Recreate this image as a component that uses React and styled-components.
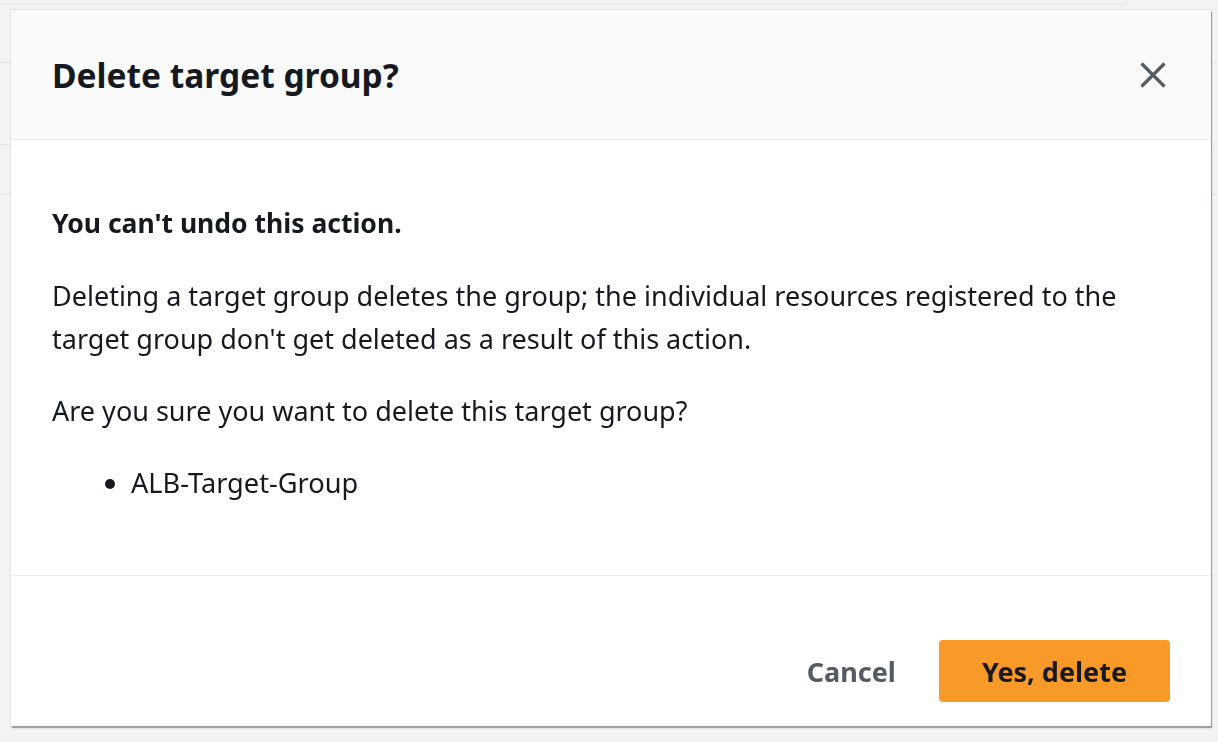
import React from "react";
import styled, { createGlobalStyle } from "styled-components";

const Global = createGlobalStyle`
  html, body { margin: 0; padding: 0; }
  body {
    background: #f2f3f3;
    font-family: "Noto Sans", "Open Sans", Arial, sans-serif;
    color: #16191f;
    width: 1218px;
    height: 742px;
    overflow: hidden;
  }
`;

const Page = styled.div`
  height: 742px;
  display: flex;
  flex-direction: column;
  background: #f2f3f3;
`;

const GhostBar = styled.div`
  height: ${(p) => p.$h}px;
  margin-right: ${(p) => p.$mr || 0}px;
  border-bottom: 1px solid ${(p) => p.$c || "#e6e8e8"};
  border-radius: 0 0 4px 0;
`;

const Overlay = styled.div`
  position: fixed;
  inset: 0;
  display: flex;
  align-items: flex-start;
  padding: 10px 0 0 11px;
`;

const Dialog = styled.div`
  width: 1200px;
  height: 716px;
  background: #ffffff;
  display: flex;
  flex-direction: column;
  box-shadow: 1px 2px 1px rgba(0, 28, 36, 0.35), 0 0 0 1px rgba(0, 28, 36, 0.06);
`;

const Header = styled.header`
  height: 129px;
  flex: none;
  display: flex;
  align-items: center;
  justify-content: space-between;
  padding: 0 41px;
  background: #fafafa;
  border-bottom: 1px solid #eaeded;
`;

const Title = styled.h2`
  margin: 0;
  font-size: 33.5px;
  line-height: 44px;
  font-weight: 700;
  color: #16191f;
`;

const CloseButton = styled.button`
  border: 0;
  background: transparent;
  padding: 0;
  width: 26px;
  height: 26px;
  display: flex;
  align-items: center;
  justify-content: center;
  cursor: pointer;
  margin-right: 4px;
`;

const Body = styled.div`
  flex: 1;
  padding: 62px 41px 0;
`;

const Para = styled.p`
  margin: 0 0 29px;
  font-size: ${(p) => (p.$strong ? 26.5 : 27)}px;
  line-height: 43px;
  font-weight: ${(p) => (p.$strong ? 700 : 400)};
`;

const List = styled.ul`
  margin: 0;
  padding-left: 79px;
  font-size: 27.2px;
  line-height: 43px;
`;

const Footer = styled.footer`
  height: 151px;
  flex: none;
  border-top: 1px solid #eaeded;
  display: flex;
  justify-content: flex-end;
  align-items: flex-start;
  padding: 64px 41px 0;
  box-sizing: border-box;
`;

const Button = styled.button`
  height: 62px;
  border-radius: 4px;
  border: 0;
  font-family: inherit;
  font-size: 27px;
  font-weight: 700;
  padding: 0 43px;
  background: ${(p) => (p.$primary ? "#f99a28" : "transparent")};
  color: ${(p) => (p.$primary ? "#16191f" : "#545b64")};
  cursor: pointer;
`;

function CloseIcon() {
  return (
    <svg width="26" height="26" viewBox="0 0 26 26" fill="none">
      <path d="M1.5 1.5 L24.5 24.5 M24.5 1.5 L1.5 24.5" stroke="#545b64" strokeWidth="3.2" strokeLinecap="butt" />
    </svg>
  );
}

export default function App() {
  return (
    <>
      <Global />
      <Page>
        <GhostBar $h={4} $mr={90} />
        <GhostBar $h={57} />
        <GhostBar $h={81} />
        <GhostBar $h={49} $c="#dde6ec" />
      </Page>
      <Overlay>
        <Dialog role="dialog" aria-modal="true">
          <Header>
            <Title>Delete target group?</Title>
            <CloseButton aria-label="Close">
              <CloseIcon />
            </CloseButton>
          </Header>
          <Body>
            <Para $strong>You can't undo this action.</Para>
            <Para>
              Deleting a target group deletes the group; the individual resources registered to the
              target group don't get deleted as a result of this action.
            </Para>
            <Para>Are you sure you want to delete this target group?</Para>
            <List>
              <li>ALB-Target-Group</li>
            </List>
          </Body>
          <Footer>
            <Button>Cancel</Button>
            <Button $primary>Yes, delete</Button>
          </Footer>
        </Dialog>
      </Overlay>
    </>
  );
}
